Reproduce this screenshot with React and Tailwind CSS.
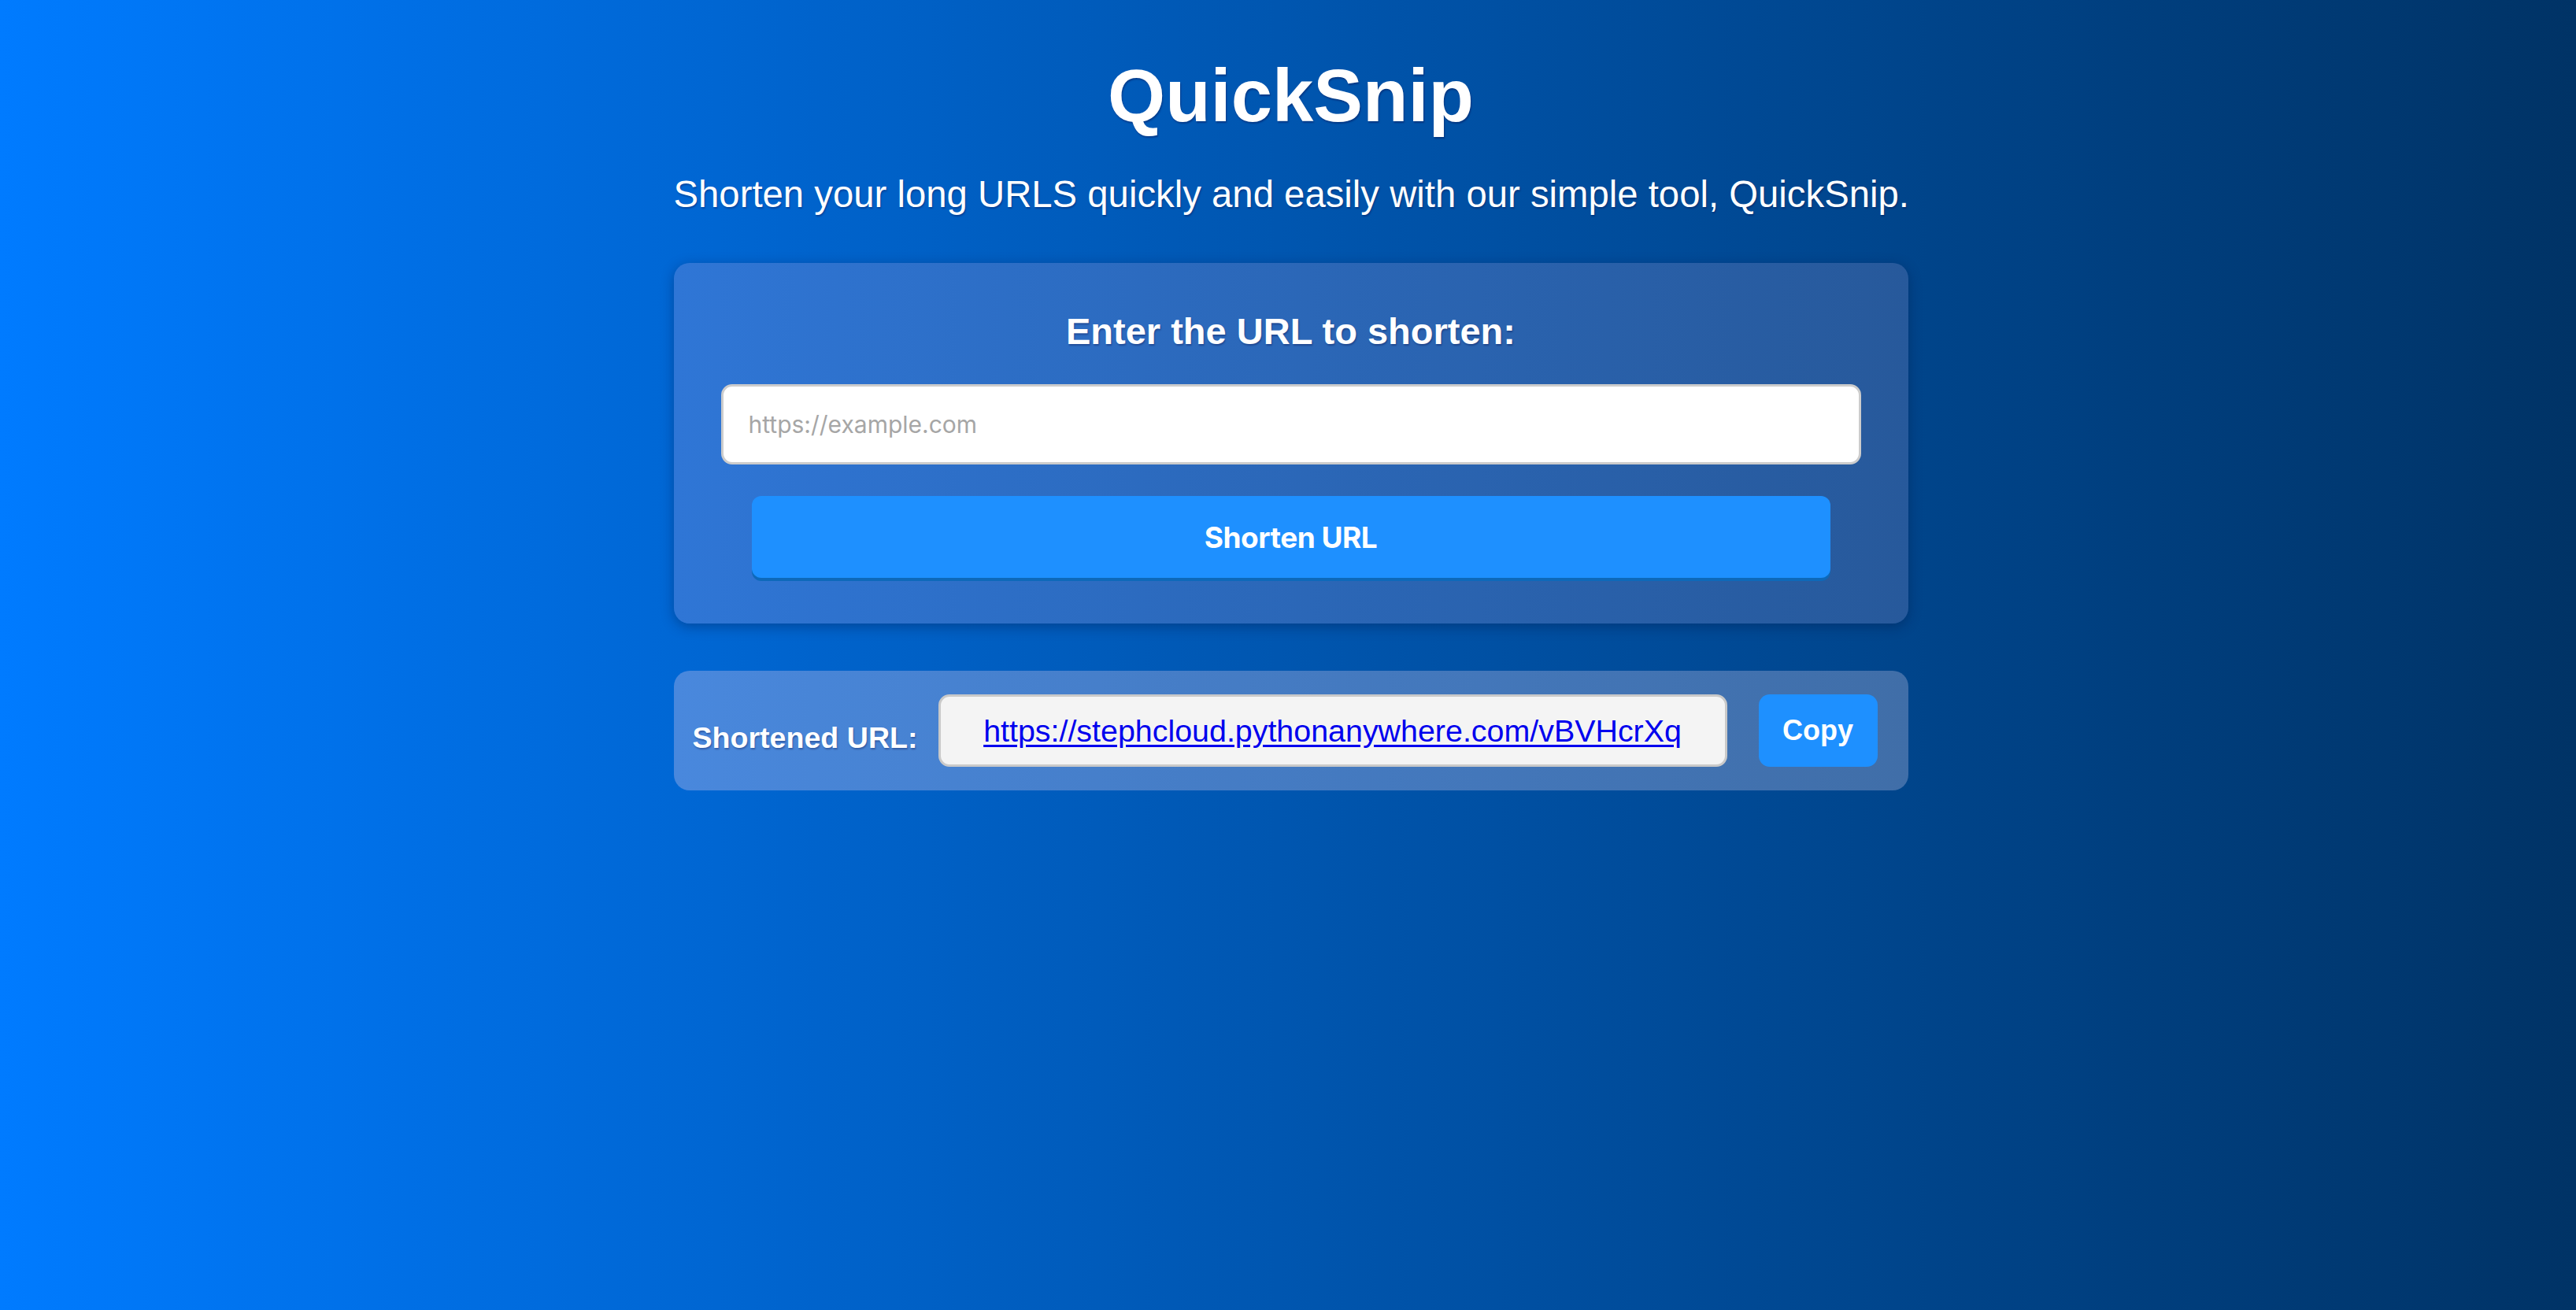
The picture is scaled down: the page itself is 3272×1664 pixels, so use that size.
import React, { useState } from 'react';

const App = () => {
  const [url, setUrl] = useState('');
  const shortUrl = 'https://stephcloud.pythonanywhere.com/vBVHcrXq';

  return (
    <div className="min-h-screen w-full bg-linear-to-r from-[#007bff] to-[#003366] font-['Liberation_Sans',Arial,sans-serif] text-white">
      <div className="flex justify-center pl-[7px]">
        <div className="w-[1568px] pt-[75px]">
          <h1 className="text-center text-[94px] font-bold leading-none [text-shadow:1px_2px_2px_rgba(0,0,60,0.35)]">
            QuickSnip
          </h1>
          <p className="mt-[54px] text-center text-[47.3px] leading-none whitespace-nowrap [text-shadow:1px_2px_2px_rgba(0,0,60,0.3)]">
            Shorten your long URLS quickly and easily with our simple tool, QuickSnip.
          </p>

          <div className="mt-[64px] rounded-[20px] bg-linear-to-r from-[#2f76d6] to-[#27599b] px-[60px] pt-[63px] pb-[58px] shadow-[0_4px_16px_rgba(0,20,60,0.35)]">
            <h2 className="text-center text-[47px] font-bold leading-none [text-shadow:1px_2px_2px_rgba(0,0,60,0.3)]">
              Enter the URL to shorten:
            </h2>
            <input
              type="text"
              value={url}
              onChange={(e) => setUrl(e.target.value)}
              placeholder="https://example.com"
              className="mt-[44px] block h-[102px] w-full rounded-[14px] border-[3px] border-[#cccccc] bg-white px-[32px] font-['Inter',sans-serif] text-[30px] text-[#333] outline-none placeholder:text-[#a6a6a6]"
            />
            <button
              type="button"
              className="mx-auto mt-[40px] block h-[104px] w-[1370px] rounded-[12px] bg-[#1e90ff] font-['Inter',sans-serif] text-[37px] font-bold tracking-[-0.5px] text-white shadow-[0_4px_0_#0d69ba]"
            >
              Shorten URL
            </button>
          </div>

          <div className="mt-[60px] flex items-center rounded-[20px] bg-linear-to-r from-[#4988dd] to-[#406ea8] py-[30px] pr-[39px] pl-[24px]">
            <span className="mt-[18px] whitespace-nowrap text-[37.6px] font-bold leading-none [text-shadow:1px_2px_2px_rgba(0,0,60,0.3)]">
              Shortened URL:
            </span>
            <div className="ml-[26px] flex h-[92px] flex-1 items-center justify-center rounded-[14px] border-[3px] border-[#c9c9c9] bg-[#f4f4f4]">
              <a href="#" className="text-[39.4px] leading-none text-[#0000ee] underline underline-offset-[4px]">
                {shortUrl}
              </a>
            </div>
            <button
              type="button"
              className="ml-[40px] h-[92px] w-[151px] rounded-[14px] bg-[#1e90ff] text-[36px] font-bold text-white"
            >
              Copy
            </button>
          </div>
        </div>
      </div>
    </div>
  );
};

export default App;
